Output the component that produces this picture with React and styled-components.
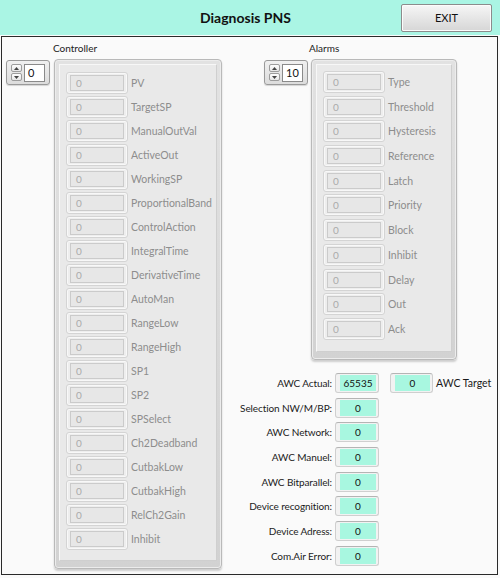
import React from "react"
import styled, { createGlobalStyle } from "styled-components"

const GlobalStyle = createGlobalStyle`
  body {
    margin: 0;
    font-family: Lato, "Open Sans", sans-serif;
    font-size: 10px;
  }
`;

const Window = styled.div`
  width: 500px;
  height: 578px;
  background: #fafafa;
  display: flex;
  flex-direction: column;
  box-sizing: border-box;
`;

const Header = styled.div`
  height: 35px;
  background: #aaf5e4;
  display: grid;
  grid-template-columns: 1fr auto 1fr;
  align-items: center;
  flex-shrink: 0;
`;

const Title = styled.div`
  grid-column: 2;
  font-weight: bold;
  font-size: 14px;
  color: #111;
  margin-right: 9px;
`;

const ExitButton = styled.button`
  grid-column: 3;
  justify-self: end;
  margin-right: 8px;
  width: 91px;
  height: 28px;
  border: 1px solid #8c8c8c;
  border-radius: 2px;
  background: linear-gradient(#f6f6f6, #e6e6e6 50%, #d6d6d6);
  box-shadow: inset 0 0 0 1px #fcfcfc;
  font-family: Lato, sans-serif;
  font-size: 11px;
  color: #111;
  padding: 0;
`;

const Panel = styled.div`
  flex: 1;
  margin: 1px 2px 3px 1px;
  border: 1px solid #2a2a2a;
  display: flex;
  padding: 0 0 0 4px;
`;

const Group = styled.div`
  display: flex;
  flex-direction: column;
  margin-left: ${p => p.$indent || 0}px;
`;

const GroupLabel = styled.div`
  height: 22px;
  line-height: 22px;
  margin-left: ${p => p.$offset}px;
  color: #222;
`;

const GroupBody = styled.div`
  display: flex;
  align-items: flex-start;
  gap: ${p => p.$gap}px;
`;

const Spinner = styled.div`
  margin-top: 1px;
  width: 44px;
  height: 25px;
  box-sizing: border-box;
  border: 1px solid #9a9a9a;
  border-radius: 3px;
  background: linear-gradient(#f0f0f0, #dcdcdc);
  box-shadow: 0 1px 1px rgba(0, 0, 0, 0.15);
  display: flex;
  align-items: center;
  padding-left: 4px;
  gap: 2px;
`;

const Arrows = styled.div`
  display: flex;
  flex-direction: column;
  gap: 1px;
`;

const ArrowBtn = styled.div`
  width: 11px;
  height: 8px;
  box-sizing: border-box;
  border: 1px solid #9c9c9c;
  border-radius: 2px;
  background: linear-gradient(#fdfdfd, #e6e6e6);
  display: flex;
  align-items: center;
  justify-content: center;
`;

const NumBox = styled.div`
  width: 21px;
  height: 18px;
  box-sizing: border-box;
  border: 1px solid #8a8a8a;
  background: #fff;
  color: #111;
  padding-left: 3px;
  line-height: 16px;
  font-size: 11px;
`;

const ArrayFrame = styled.div`
  width: ${p => p.$w}px;
  box-sizing: border-box;
  border: 1px solid #b9b9b9;
  border-radius: 4px;
  background: linear-gradient(#e2e2e2, #d2d2d2);
  box-shadow: 0 2px 2px rgba(0, 0, 0, 0.18), inset 0 0 0 1px #ececec;
  padding: 4px 4px 7px 4px;
`;

const ArrayInner = styled.div`
  border: 1px solid #f7f7f7;
  border-right-color: #cfcfcf;
  border-bottom-color: #cfcfcf;
  background: #e9e9e9;
  padding: ${p => p.$pt}px 0 ${p => p.$pb}px 6px;
  display: flex;
  flex-direction: column;
`;

const ElemRow = styled.div`
  height: ${p => p.$h}px;
  display: flex;
  align-items: flex-start;
  gap: 3px;
`;

const ElemBox = styled.div`
  width: 62px;
  height: 22px;
  box-sizing: border-box;
  border: 1px solid #d4d4d4;
  border-radius: 3px;
  background: #eeeeee;
  box-shadow: inset 0 0 0 1px #f8f8f8;
  display: flex;
  align-items: center;
  justify-content: center;
`;

const ElemInput = styled.div`
  width: 54px;
  height: 16px;
  box-sizing: border-box;
  border: 1px solid #cbcbcb;
  background: #e7e7e7;
  color: #aaa;
  padding-left: 5px;
  line-height: 14px;
`;

const ElemLabel = styled.div`
  line-height: 22px;
  font-size: 10.5px;
  color: #8d8d8d;
  white-space: nowrap;
`;

const RightCol = styled.div`
  display: flex;
  flex-direction: column;
  margin-left: 17px;
`;

const Readouts = styled.div`
  margin-top: 11px;
  display: grid;
  grid-template-columns: 93px auto auto auto;
  grid-auto-rows: 24.7px;
  column-gap: 3px;
  align-items: center;
`;

const ReadLabel = styled.div`
  grid-column: 1;
  text-align: right;
  color: #1a1a1a;
  letter-spacing: -0.1px;
  white-space: nowrap;
`;

const ValueBox = styled.div`
  width: ${p => p.$w}px;
  height: 20px;
  box-sizing: border-box;
  border: 1px solid #cfcfcf;
  border-top-color: #b4b4b4;
  border-radius: 3px;
  background: #f2f2f2;
  padding: 1px 2px 1px 4px;
  margin-left: ${p => p.$ml || 0}px;
`;

const ValueFill = styled.div`
  height: 100%;
  background: #a8f7e0;
  text-align: center;
  line-height: 16px;
  color: #111;
`;

const SideLabel = styled.div`
  color: #1a1a1a;
  font-size: 10.5px;
  white-space: nowrap;
`;

const controllerItems = [
  "PV", "TargetSP", "ManualOutVal", "ActiveOut", "WorkingSP", "ProportionalBand",
  "ControlAction", "IntegralTime", "DerivativeTime", "AutoMan", "RangeLow", "RangeHigh",
  "SP1", "SP2", "SPSelect", "Ch2Deadband", "CutbakLow", "CutbakHigh", "RelCh2Gain", "Inhibit",
];

const alarmItems = [
  "Type", "Threshold", "Hysteresis", "Reference", "Latch", "Priority",
  "Block", "Inhibit", "Delay", "Out", "Ack",
];

const readouts = [
  "Selection NW/M/BP:", "AWC Network:", "AWC Manuel:", "AWC Bitparallel:",
  "Device recognition:", "Device Adress:", "Com.Air Error:",
];

const Tri = ({ up }) => (
  <svg width="5" height="3" viewBox="0 0 5 3">
    <polygon points={up ? "0,3 5,3 2.5,0" : "0,0 5,0 2.5,3"} fill="#444" />
  </svg>
);

const IndexSpinner = ({ value }) => (
  <Spinner>
    <Arrows>
      <ArrowBtn><Tri up /></ArrowBtn>
      <ArrowBtn><Tri /></ArrowBtn>
    </Arrows>
    <NumBox>{value}</NumBox>
  </Spinner>
);

const ArrayShell = ({ items, width, rowH, pt, pb }) => (
  <ArrayFrame $w={width}>
    <ArrayInner $pt={pt} $pb={pb}>
      {items.map(name => (
        <ElemRow key={name} $h={rowH}>
          <ElemBox><ElemInput>0</ElemInput></ElemBox>
          <ElemLabel>{name}</ElemLabel>
        </ElemRow>
      ))}
    </ArrayInner>
  </ArrayFrame>
);

const App = () => (
  <>
    <GlobalStyle />
    <Window>
      <Header>
        <Title>Diagnosis PNS</Title>
        <ExitButton>EXIT</ExitButton>
      </Header>
      <Panel>
        <Group>
          <GroupLabel $offset={47}>Controller</GroupLabel>
          <GroupBody $gap={4}>
            <IndexSpinner value="0" />
            <ArrayShell items={controllerItems} width={168} rowH={24} pt={7} pb={8} />
          </GroupBody>
        </Group>
        <RightCol>
          <Group $indent={25}>
            <GroupLabel $offset={45}>Alarms</GroupLabel>
            <GroupBody $gap={3}>
              <IndexSpinner value="10" />
              <ArrayShell items={alarmItems} width={146} rowH={24.7} pt={6} pb={8} />
            </GroupBody>
          </Group>
          <Readouts>
            <ReadLabel>AWC Actual:</ReadLabel>
            <ValueBox $w={44}><ValueFill>65535</ValueFill></ValueBox>
            <ValueBox $w={43} $ml={8}><ValueFill>0</ValueFill></ValueBox>
            <SideLabel>AWC Target</SideLabel>
            {readouts.map(label => (
              <React.Fragment key={label}>
                <ReadLabel>{label}</ReadLabel>
                <ValueBox $w={44}><ValueFill>0</ValueFill></ValueBox>
                <span />
                <span />
              </React.Fragment>
            ))}
          </Readouts>
        </RightCol>
      </Panel>
    </Window>
  </>
)

export default App
